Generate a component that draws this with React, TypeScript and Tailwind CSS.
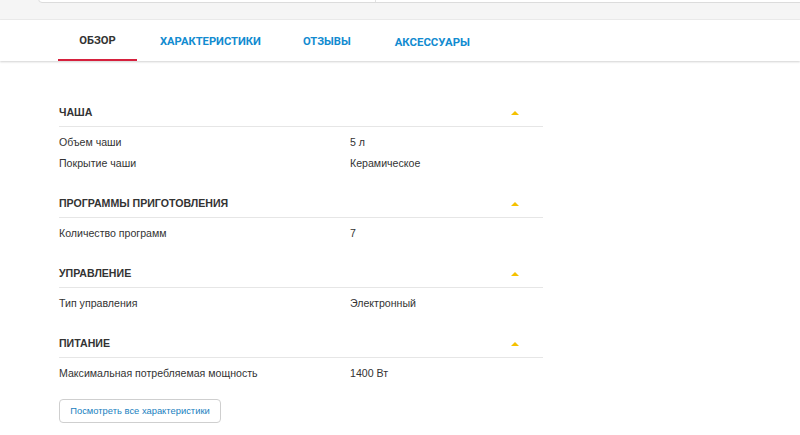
import React from "react";

const sections = [
  { title: "ЧАША", rows: [["Объем чаши", "5 л"], ["Покрытие чаши", "Керамическое"]] },
  { title: "ПРОГРАММЫ ПРИГОТОВЛЕНИЯ", rows: [["Количество программ", "7"]] },
  { title: "УПРАВЛЕНИЕ", rows: [["Тип управления", "Электронный"]] },
  { title: "ПИТАНИЕ", rows: [["Максимальная потребляемая мощность", "1400 Вт"]] },
];

export default function App() {
  return (
    <div className="w-[800px] h-[435px] bg-white overflow-hidden" style={{ fontFamily: '"Liberation Sans", Arial, sans-serif' }}>
      <div className="h-[20px] bg-[#f5f5f5] relative border-b border-[#ececec]">
        <div className="absolute left-[38px] right-[-10px] top-[-10px] h-[13px] bg-white border border-[#dcdcdc] rounded-[4px] flex">
          <div className="w-[337px] border-r border-[#e2e2e2]" />
        </div>
      </div>
      <div className="h-[41px] bg-white flex pl-[58px] shadow-[0_1px_2px_rgba(0,0,0,0.18)] relative" style={{ fontFamily: 'Roboto, "Liberation Sans", sans-serif' }}>
        <div className="w-[79px] h-full flex items-center justify-center pt-[4px] border-b-2 border-[#d6203d] text-[11.2px] font-bold text-[#333]">ОБЗОР</div>
        <div className="ml-[23px] h-full flex items-center pt-[4px] text-[11.2px] font-bold text-[#128bd0]">ХАРАКТЕРИСТИКИ</div>
        <div className="ml-[42px] h-full flex items-center pt-[4px] text-[11.2px] font-bold text-[#128bd0]">ОТЗЫВЫ</div>
        <div className="ml-[44px] h-full flex items-center pt-[4px] text-[11.4px] font-bold text-[#128bd0]">АКСЕССУАРЫ</div>
      </div>
      <div className="pl-[59px] w-[543px] pt-[38px] box-content">
        <div className="w-[484px] flex flex-col gap-[16px]">
          {sections.map((s) => (
            <div key={s.title}>
              <div className="h-[28px] flex items-center justify-between border-b border-[#e6e6e6]">
                <span className="text-[10.6px] font-bold text-[#333]">{s.title}</span>
                <span className="mr-[24px] w-0 h-0 border-l-[4px] border-r-[4px] border-b-[4px] border-l-transparent border-r-transparent border-b-[#f5c100]" />
              </div>
              <div className="pt-[5px]">
                {s.rows.map(([k, v]) => (
                  <div key={k} className="h-[21px] flex items-center text-[10.6px] text-[#333]">
                    <span className="w-[291px]">{k}</span>
                    <span>{v}</span>
                  </div>
                ))}
              </div>
            </div>
          ))}
        </div>
        <button className="mt-[15px] w-[162px] h-[24px] border border-[#cfcfcf] rounded-[4px] text-[9.4px] text-[#1a7fc0] bg-white">Посмотреть все характеристики</button>
      </div>
    </div>
  );
}
